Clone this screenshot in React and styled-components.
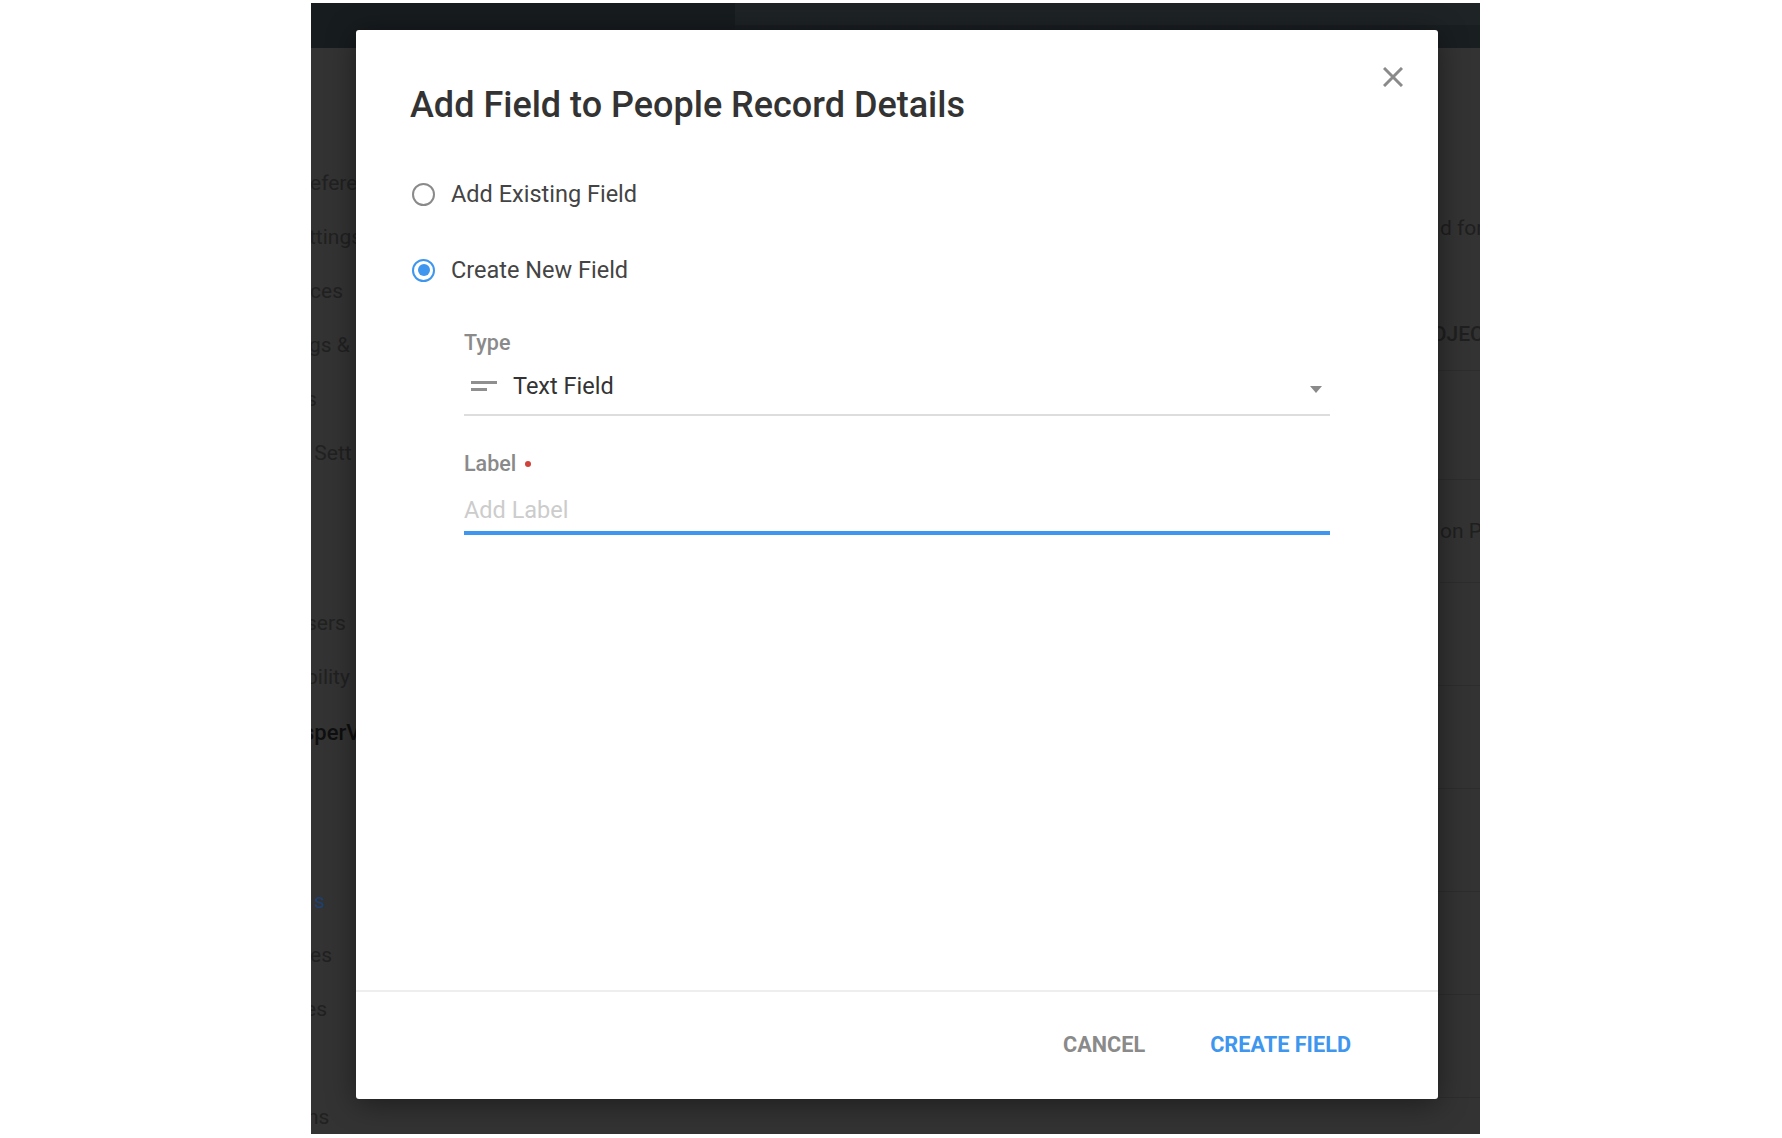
import React from 'react'
import styled, { createGlobalStyle } from 'styled-components'

const Global = createGlobalStyle`
	html, body {
		margin: 0;
		background: #fff;
		font-family: Roboto, 'Liberation Sans', sans-serif;
	}
	* { box-sizing: border-box; }
`
const Page = styled.div`
	width: 1782px;
	height: 1138px;
	padding: 3px 0 0 311px;
	overflow: hidden;
`
const Stage = styled.div`
	position: relative;
	width: 1169px;
	height: 1131px;
	background: #333;
	overflow: hidden;
`
const TopBar = styled.div`
	display: flex;
	height: 45px;
	background: #171c1f;
`
const TopBarRight = styled.div`
	flex: 1;
	margin-left: 424px;
	background: linear-gradient(#1e2326 0, #1e2326 50%, #191e21 50%, #191e21 100%);
`
const Columns = styled.div`
	display: flex;
	justify-content: space-between;
`
const Side = styled.div`
	width: 45px;
	padding-top: 108px;
	overflow: hidden;
	display: flex;
	flex-direction: column;
	gap: 116px;
`
const SideGroup = styled.div`
	display: flex;
	flex-direction: column;
	&:last-child {
		margin-top: -62px;
	}
`
const SideItem = styled.div`
	height: 54px;
	line-height: ${(p) => (p.$bold ? 58 : 54)}px;
	font-size: ${(p) => (p.$bold ? 22 : 21)}px;
	white-space: nowrap;
	margin-left: ${(p) => p.$shift || 0}px;
	color: ${(p) => p.$color || '#212121'};
	font-weight: ${(p) => (p.$bold ? 500 : 400)};
`
const Table = styled.div`
	width: 42px;
	overflow: hidden;
`
const TableHead = styled.div`
	height: 323px;
	padding-top: 167px;
	border-bottom: 1px solid #2d2d2d;
`
const HeadText = styled.div`
	height: 26px;
	line-height: 26px;
	font-size: 21px;
	white-space: nowrap;
	margin-left: ${(p) => p.$shift || 0}px;
	margin-bottom: 80px;
	color: ${(p) => p.$color || '#1f1f1f'};
	font-weight: ${(p) => (p.$bold ? 500 : 400)};
`
const TableRow = styled.div`
	height: ${(p) => p.$h || 103}px;
	line-height: ${(p) => p.$h || 103}px;
	font-size: 21px;
	white-space: nowrap;
	color: #1f1f1f;
	margin-left: ${(p) => p.$shift || 0}px;
	border-bottom: 1px solid #2d2d2d;
`
const Modal = styled.div`
	position: absolute;
	left: 45px;
	top: 27px;
	width: 1082px;
	height: 1069px;
	background: #fff;
	border-radius: 3px;
	box-shadow: 0 4px 30px rgba(0, 0, 0, 0.45);
	display: flex;
	flex-direction: column;
`
const Close = styled.button`
	position: absolute;
	top: 37px;
	right: 35px;
	width: 20px;
	height: 20px;
	padding: 0;
	border: 0;
	background: none;
	display: block;
`
const Body = styled.div`
	flex: 1;
	padding: 53px 54px 0;
`
const Title = styled.h1`
	margin: 0 0 47px;
	font-size: 36px;
	line-height: 44px;
	font-weight: 500;
	color: #333;
`
const RadioRow = styled.label`
	display: flex;
	align-items: center;
	height: 40px;
	margin-bottom: 36px;
	padding-left: 2px;
	gap: 16px;
	font-size: 23.5px;
	color: #444;
`
const Radio = styled.span`
	width: 23px;
	height: 23px;
	border-radius: 50%;
	border: 2.5px solid ${(p) => (p.$on ? '#3e96ee' : '#8a8a8a')};
	display: flex;
	align-items: center;
	justify-content: center;
	&::after {
		content: '';
		display: ${(p) => (p.$on ? 'block' : 'none')};
		width: 12px;
		height: 12px;
		border-radius: 50%;
		background: #3e96ee;
	}
`
const Fields = styled.div`
	margin: 40px 54px 0;
	width: 866px;
`
const FieldLabel = styled.div`
	height: 26px;
	line-height: 26px;
	font-size: 21.5px;
	font-weight: 500;
	color: #8a8a8a;
	display: flex;
	align-items: center;
`
const Required = styled.span`
	width: 6px;
	height: 6px;
	margin-left: 9px;
	border-radius: 50%;
	background: #d0433a;
`
const Select = styled.div`
	height: 60px;
	padding: 1px 8px 0 6px;
	margin-bottom: 35px;
	border-bottom: 2px solid #ddd;
	display: flex;
	align-items: center;
	font-size: 23.5px;
	color: #333;
`
const SelectIcon = styled.svg`
	width: 28px;
	height: 12px;
	margin-right: 15px;
`
const Caret = styled.svg`
	width: 12px;
	height: 7px;
	margin-left: auto;
	margin-top: 8px;
`
const Input = styled.input`
	display: block;
	width: 100%;
	height: 58px;
	padding: 11px 0 0;
	border: 0;
	border-bottom: 4px solid #3e96ee;
	outline: 0;
	font-family: inherit;
	font-size: 23.5px;
	color: #333;
	&::placeholder {
		color: #ccc;
		opacity: 1;
	}
`
const Footer = styled.div`
	height: 109px;
	padding: 0 87px 3px 0;
	border-top: 2px solid #eee;
	display: flex;
	align-items: center;
	justify-content: flex-end;
	gap: 65px;
`
const Action = styled.button`
	padding: 0;
	border: 0;
	background: none;
	font-family: inherit;
	font-size: 21.7px;
	font-weight: 700;
	color: ${(p) => (p.$primary ? '#3e96ee' : '#8a8a8a')};
`

const sideGroups = [
	[
		{ text: 'efere', shift: -1 },
		{ text: 'ttings', shift: -2 },
		{ text: 'ces', shift: -1 },
		{ text: 'gs &', shift: -2 },
		{ text: 's', shift: -5 },
		{ text: ': Sett', shift: -7 },
	],
	[
		{ text: 'sers', shift: -5 },
		{ text: 'bility', shift: -5 },
		{ text: 'sperV', shift: -8, bold: true, color: '#0f0f0f' },
	],
	[
		{ text: 's', shift: 3, color: '#1f3f6e' },
		{ text: 'es', shift: -1 },
		{ text: 'es', shift: -6 },
	],
	[{ text: 'ns', shift: -4 }],
]

export default function App() {
	return (
		<Page>
			<Global />
			<Stage>
				<TopBar>
					<TopBarRight />
				</TopBar>
				<Columns>
					<Side>
						{sideGroups.map((group, i) => (
							<SideGroup key={i}>
								{group.map((item, j) => (
									<SideItem key={j} $shift={item.shift} $bold={item.bold} $color={item.color}>
										{item.text}
									</SideItem>
								))}
							</SideGroup>
						))}
					</Side>
					<Table>
						<TableHead>
							<HeadText $shift={2}>d for</HeadText>
							<HeadText $shift={-6} $bold>
								OJEC
							</HeadText>
						</TableHead>
						<TableRow $h={109} />
						<TableRow $shift={2}>on P</TableRow>
						<TableRow />
						<TableRow />
						<TableRow />
						<TableRow />
						<TableRow />
					</Table>
				</Columns>
				<Modal>
					<Close aria-label='Close'>
						<svg width='20' height='20' viewBox='0 0 20 20' fill='none' stroke='#8a8a8a' strokeWidth='3'>
							<path d='M1 1 L19 19 M19 1 L1 19' />
						</svg>
					</Close>
					<Body>
						<Title>Add Field to People Record Details</Title>
						<RadioRow>
							<Radio />
							Add Existing Field
						</RadioRow>
						<RadioRow>
							<Radio $on />
							Create New Field
						</RadioRow>
						<Fields>
							<FieldLabel>Type</FieldLabel>
							<Select>
								<SelectIcon viewBox='0 0 28 12' fill='none' stroke='#8f8f8f' strokeWidth='3'>
									<path d='M1 2.5 H27 M1 9.5 H17' />
								</SelectIcon>
								Text Field
								<Caret viewBox='0 0 12 7'>
									<path d='M0 0 H12 L6 7 Z' fill='#8a8a8a' />
								</Caret>
							</Select>
							<FieldLabel>
								Label
								<Required />
							</FieldLabel>
							<Input placeholder='Add Label' />
						</Fields>
					</Body>
					<Footer>
						<Action>CANCEL</Action>
						<Action $primary>CREATE FIELD</Action>
					</Footer>
				</Modal>
			</Stage>
		</Page>
	)
}
